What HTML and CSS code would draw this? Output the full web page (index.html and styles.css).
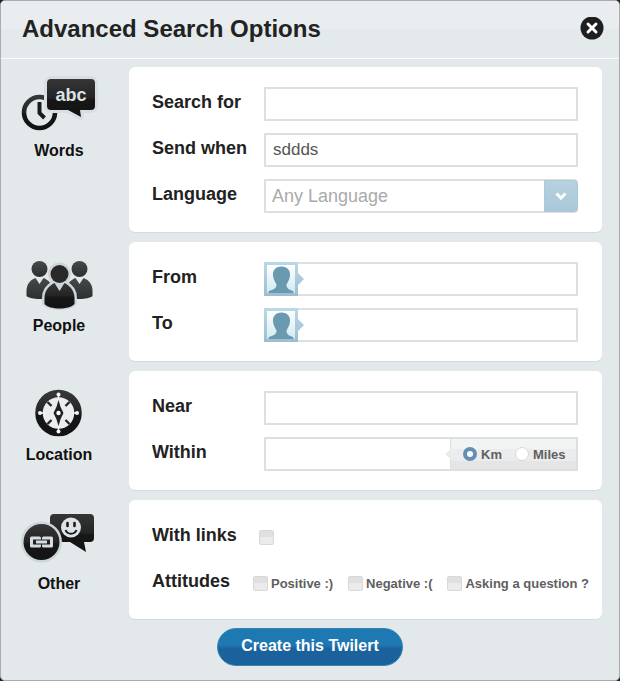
FILE: index.html
```
<!DOCTYPE html>
<html lang="en">
<head>
<meta charset="utf-8">
<title>Advanced Search Options</title>
<link rel="stylesheet" href="styles.css">
</head>
<body>
<form class="dialog">
  <header class="dialog-head">
    <h1>Advanced Search Options</h1>
    <button type="button" class="close" aria-label="Close">
      <svg width="24" height="24" viewBox="0 0 24 24"><circle cx="12" cy="11" r="11.500" fill="#1f1f20"/><path d="M8 7l8 8M16 7l-8 8" stroke="#fff" stroke-width="3" stroke-linecap="round"/></svg>
    </button>
  </header>

  <main class="sections">
    <svg width="0" height="0" class="defs" aria-hidden="true">
      <defs>
        <linearGradient id="ink" x1="0" y1="0" x2="0" y2="1"><stop offset="0" stop-color="#363636"/><stop offset=".5" stop-color="#242424"/><stop offset=".55" stop-color="#171717"/><stop offset="1" stop-color="#131313"/></linearGradient>
        <linearGradient id="soft" x1="0" y1="0" x2="0" y2="1"><stop offset="0" stop-color="#484a4a"/><stop offset="1" stop-color="#2c2f2f"/></linearGradient>
        <linearGradient id="frame" x1="0" y1="0" x2="0" y2="1"><stop offset="0" stop-color="#bbd8e6"/><stop offset="1" stop-color="#9dbdce"/></linearGradient>
        <linearGradient id="pic" x1="0" y1="0" x2="0" y2="1"><stop offset="0" stop-color="#fff"/><stop offset="1" stop-color="#cfeaf2"/></linearGradient>
      </defs>
    </svg>

    <section class="section">
      <div class="side">
        <svg class="icon" width="80" height="64" viewBox="0 0 80 64" aria-hidden="true">
          <circle cx="20.500" cy="40.500" r="15.500" fill="none" stroke="url(#ink)" stroke-width="4.600"/>
          <path d="M20.500 30v11l5 5" fill="none" stroke="#1b1b1b" stroke-width="4"/>
          <path d="M32 7h40a4 4 0 0 1 4 4v23a4 4 0 0 1-4 4H61l1 7-13-7H32a4 4 0 0 1-4-4V11a4 4 0 0 1 4-4z" fill="none" stroke="#d8dfe2" stroke-width="6" stroke-linejoin="round"/>
          <path d="M32 7h40a4 4 0 0 1 4 4v23a4 4 0 0 1-4 4H61l1 7-13-7H32a4 4 0 0 1-4-4V11a4 4 0 0 1 4-4z" fill="url(#ink)"/>
          <text x="52" y="29" text-anchor="middle" class="abc">abc</text>
        </svg>
        <h2>Words</h2>
      </div>
      <div class="panel">
        <div class="row"><label for="q">Search for</label><input class="field" id="q" type="text"></div>
        <div class="row"><label for="when">Send when</label><input class="field" id="when" type="text" value="sddds"></div>
        <div class="row"><label for="lang">Language</label>
          <div class="picker">
            <select class="field" id="lang"><option>Any Language</option></select>
            <span class="arrow"><svg width="12" height="8" viewBox="0 0 12 8"><path d="M1.500 1.500L6 6l4.500-4.500" fill="none" stroke="#fff" stroke-width="3"/></svg></span>
          </div>
        </div>
      </div>
    </section>

    <section class="section">
      <div class="side">
        <svg class="icon" width="80" height="64" viewBox="0 -6 80 64" aria-hidden="true">
          <g fill="url(#soft)">
            <circle cx="20.500" cy="16" r="8"/><circle cx="60.500" cy="16" r="8"/>
            <path d="M7.500 43V38c0-6 3-11 9-13l4 6 4-6c5 2 9 6 9 12v6c-4 4-22 4-26 0z"/>
            <path d="M47.500 43v-6c0-6 4-10 9-12l4 6 4-6c6 2 9 7 9 13v5c-4 4-22 4-26 0z"/>
          </g>
          <g fill="#ccd5d9" stroke="#ccd5d9" stroke-width="5" stroke-linejoin="round"><circle cx="40.500" cy="21" r="9"/><path d="M25.500 50v-5c0-7 4-12 10-15h10c6 3 10 8 10 15v5c-5 6-25 6-30 0z"/></g>
          <circle cx="40.500" cy="21" r="9" fill="#292929"/>
          <path d="M25.500 51v-6c0-7 4-12 10-15l5 8 5-8c6 3 10 8 10 15v6c-5 6-25 6-30 0z" fill="url(#ink)"/>
        </svg>
        <h2>People</h2>
      </div>
      <div class="panel">
        <div class="row"><label for="from">From</label>
          <div class="person"><input class="field" id="from" type="text">
            <svg class="avatar" width="40" height="34" viewBox="0 0 40 34" aria-hidden="true"><path d="M0 0h34v11l6 6-6 6v11H0z" fill="url(#frame)"/><path d="M3 3h28v28H3z" fill="url(#pic)"/><path d="M17.500 4.500c6 0 9 4 8.500 9-.4 4-2 6-3.500 9 0 5 4 5 7 7v1.500H4.500V29.500c3-2 8-2 8-7-1.500-3-3.100-5-3.500-9-.5-5 2.500-9 8.500-9z" fill="#6a9ab0"/></svg>
          </div>
        </div>
        <div class="row"><label for="to">To</label>
          <div class="person"><input class="field" id="to" type="text">
            <svg class="avatar" width="40" height="34" viewBox="0 0 40 34" aria-hidden="true"><path d="M0 0h34v11l6 6-6 6v11H0z" fill="url(#frame)"/><path d="M3 3h28v28H3z" fill="url(#pic)"/><path d="M17.500 4.500c6 0 9 4 8.500 9-.4 4-2 6-3.500 9 0 5 4 5 7 7v1.500H4.500V29.500c3-2 8-2 8-7-1.500-3-3.100-5-3.500-9-.5-5 2.500-9 8.500-9z" fill="#6a9ab0"/></svg>
          </div>
        </div>
      </div>
    </section>

    <section class="section">
      <div class="side">
        <svg class="icon" width="80" height="64" viewBox="0 0 80 64" aria-hidden="true">
          <circle cx="39.500" cy="37" r="19.500" fill="#e9edef" stroke="url(#ink)" stroke-width="7.500"/>
          <path d="M39.500 18v6M39.500 50v6M20.500 37h6M52.500 37h6" stroke="#f4f6f7" stroke-width="1.400"/>
          <g fill="#f4f6f7"><circle cx="39.500" cy="18.500" r="2"/><circle cx="39.500" cy="55.500" r="2"/><circle cx="21" cy="37" r="2"/><circle cx="58" cy="37" r="2"/></g>
          <path d="M28.500 26l4 4M50.500 26l-4 4M28.500 48l4-4M50.500 48l-4-4" stroke="#242424" stroke-width="2.400"/>
          <path d="M39.500 24q1.500 7 5 13-3.500 6-5 13-1.500-7-5-13 3.500-6 5-13z" fill="#202020"/>
          <circle cx="39.500" cy="37" r="2.200" fill="#fff"/>
        </svg>
        <h2>Location</h2>
      </div>
      <div class="panel">
        <div class="row"><label for="near">Near</label><input class="field" id="near" type="text"></div>
        <div class="row"><label for="within">Within</label>
          <div class="distance">
            <input id="within" type="text">
            <div class="units">
              <label><input type="radio" name="unit" checked>Km</label>
              <label><input type="radio" name="unit">Miles</label>
            </div>
          </div>
        </div>
      </div>
    </section>

    <section class="section">
      <div class="side">
        <svg class="icon" width="80" height="64" viewBox="0 0 80 64" aria-hidden="true">
          <path d="M35 9h36a4 4 0 0 1 4 4v20a4 4 0 0 1-4 4h-6l2 10-16-10H35a4 4 0 0 1-4-4V13a4 4 0 0 1 4-4z" fill="url(#ink)"/>
          <circle cx="52" cy="22.500" r="10" fill="#dde3e6"/>
          <path d="M48.500 18v3M55.500 18v3" stroke="#1b1b1b" stroke-width="2.600" stroke-linecap="round"/>
          <path d="M46.500 25c2 5 9 5 11 0" fill="none" stroke="#1b1b1b" stroke-width="2"/>
          <circle cx="22.500" cy="37" r="20.500" fill="#ccd5d9"/>
          <circle cx="22.500" cy="37" r="18" fill="url(#ink)"/>
          <g fill="none" stroke="#d5dde0" stroke-width="3" stroke-linejoin="round"><path d="M20.500 34.500V33H12.500v8h8v-1.500M24.500 34.500V33h8v8h-8v-1.500"/><path d="M17 37h11"/></g>
        </svg>
        <h2>Other</h2>
      </div>
      <div class="panel panel-other">
        <div class="row"><label for="links">With links</label><input class="link-check" id="links" type="checkbox"></div>
        <div class="row"><span class="caption" id="att">Attitudes</span>
          <div class="options" role="group" aria-labelledby="att">
            <label><input type="checkbox">Positive :)</label>
            <label><input type="checkbox">Negative :(</label>
            <label><input type="checkbox">Asking a question ?</label>
          </div>
        </div>
      </div>
    </section>
  </main>

  <footer class="dialog-foot"><button type="submit" class="create">Create this Twilert</button></footer>
</form>
</body>
</html>
```
FILE: styles.css
```
* { box-sizing: border-box; }
body {
  margin: 0;
  background: #222;
  font-family: "Liberation Sans", Arial, sans-serif;
  color: #222;
}
.dialog {
  min-height: 100vh;
  background: #e3e9eb;
  border: 1px solid #a9adaf;
  border-radius: 5px;
  overflow: hidden;
}
.dialog-head {
  display: flex;
  align-items: center;
  justify-content: space-between;
  height: 58px;
  padding: 0 15px 2px 21px;
  background: linear-gradient(#e9edef 50%, #e4e9eb 50%);
  border-bottom: 1px solid #fafbfb;
}
h1 { margin: 0; font-size: 24px; line-height: 28px; }
button { font-family: inherit; border: 0; padding: 0; cursor: pointer; }
.close { background: none; width: 24px; height: 24px; }
.close svg { display: block; }
.sections {
  display: flex;
  flex-direction: column;
  gap: 10px;
  padding: 8px 17px 0 0;
}
.defs { position: absolute; }
.section { display: grid; grid-template-columns: 116px 1fr; column-gap: 12px; }
.side { display: flex; flex-direction: column; align-items: center; padding-top: 5px; }
.icon { display: block; }
h2 { margin: 5px 0 0; font-size: 16px; line-height: 20px; color: #111; }
.abc { font-size: 18px; font-weight: bold; fill: #dce3e6; }
.panel {
  display: flex;
  flex-direction: column;
  gap: 12px;
  padding: 20px 24px 19px 23px;
  background: #fff;
  border-radius: 6px;
  box-shadow: 0 1px 1px #d3d9dc;
}
.row { display: grid; grid-template-columns: 112px 1fr; align-items: center; height: 34px; }
.row > label, .caption { font-size: 18px; font-weight: bold; line-height: 20px; white-space: nowrap; padding-bottom: 4px; }
.field, .distance {
  width: 100%;
  height: 34px;
  border: 2px solid #dedfe0;
  border-radius: 0;
  background: #fff;
}
.field { padding: 0 7px; font: 17px "Liberation Sans", Arial, sans-serif; color: #555; }
.picker, .person { position: relative; }
select.field { appearance: none; display: block; padding: 0 40px 0 6px; font-size: 18px; color: #aaa; border-radius: 0 4px 4px 0; }
.arrow {
  position: absolute;
  right: 0;
  top: 1px;
  bottom: 1px;
  width: 34px;
  display: flex;
  align-items: center;
  justify-content: center;
  background: linear-gradient(#b6d1df, #a9c8d8);
  border: 1px solid #a9cadb;
  border-radius: 0 4px 4px 0;
  pointer-events: none;
}
.person .field { display: block; padding-left: 44px; }
.avatar { position: absolute; left: 0; top: 0; }
.distance { display: grid; grid-template-columns: 1fr 126px; }
.distance > input { min-width: 0; width: 100%; border: 0; padding: 0 7px; background: none; font: 17px "Liberation Sans", Arial, sans-serif; color: #555; }
.units {
  position: relative;
  display: flex;
  align-items: center;
  gap: 13px;
  padding: 0 0 0 12px;
  background: linear-gradient(#f2f4f4 0 35%, #ebeced 35% 75%, #e5e5e5 75%);
  border-left: 1px solid #dedfe0;
}
.units::before {
  content: "";
  position: absolute;
  left: -6px;
  top: 10px;
  border: solid transparent;
  border-width: 5px 6px 5px 0;
  border-right-color: #e8eaeb;
}
.units label, .options label { display: flex; align-items: center; gap: 4px; font-size: 13px; font-weight: bold; color: #606060; white-space: nowrap; }
input[type="radio"] { appearance: none; width: 14px; height: 14px; margin: 0; border: 1px solid #d5d8d8; border-radius: 50%; background: #fff; }
input[type="radio"]:checked { border: 4px solid #648eb9; background: #fff; }
input[type="checkbox"] { appearance: none; width: 15px; height: 15px; margin: 0; border: 1px solid #d8d8d8; border-radius: 2px; background: linear-gradient(#e0e0e0 50%, #ebebeb 50%); }
.panel-other { padding-right: 13px; }
.panel-other .row { grid-template-columns: 101px 1fr; }
.link-check { justify-self: start; }
.row > .link-check { margin-left: 6px; }
.options label { gap: 3px; }
.options { display: flex; justify-content: space-between; }
.dialog-foot { display: flex; justify-content: center; padding: 9px 0 14px; }
.create {
  height: 38px;
  padding: 0 23px 2px;
  border: 1px solid #3584b4;
  border-radius: 19px;
  background: linear-gradient(#1e78b2 0 45%, #1b619b 55%);
  color: #fff;
  font-size: 16px;
  font-weight: bold;
}
```
